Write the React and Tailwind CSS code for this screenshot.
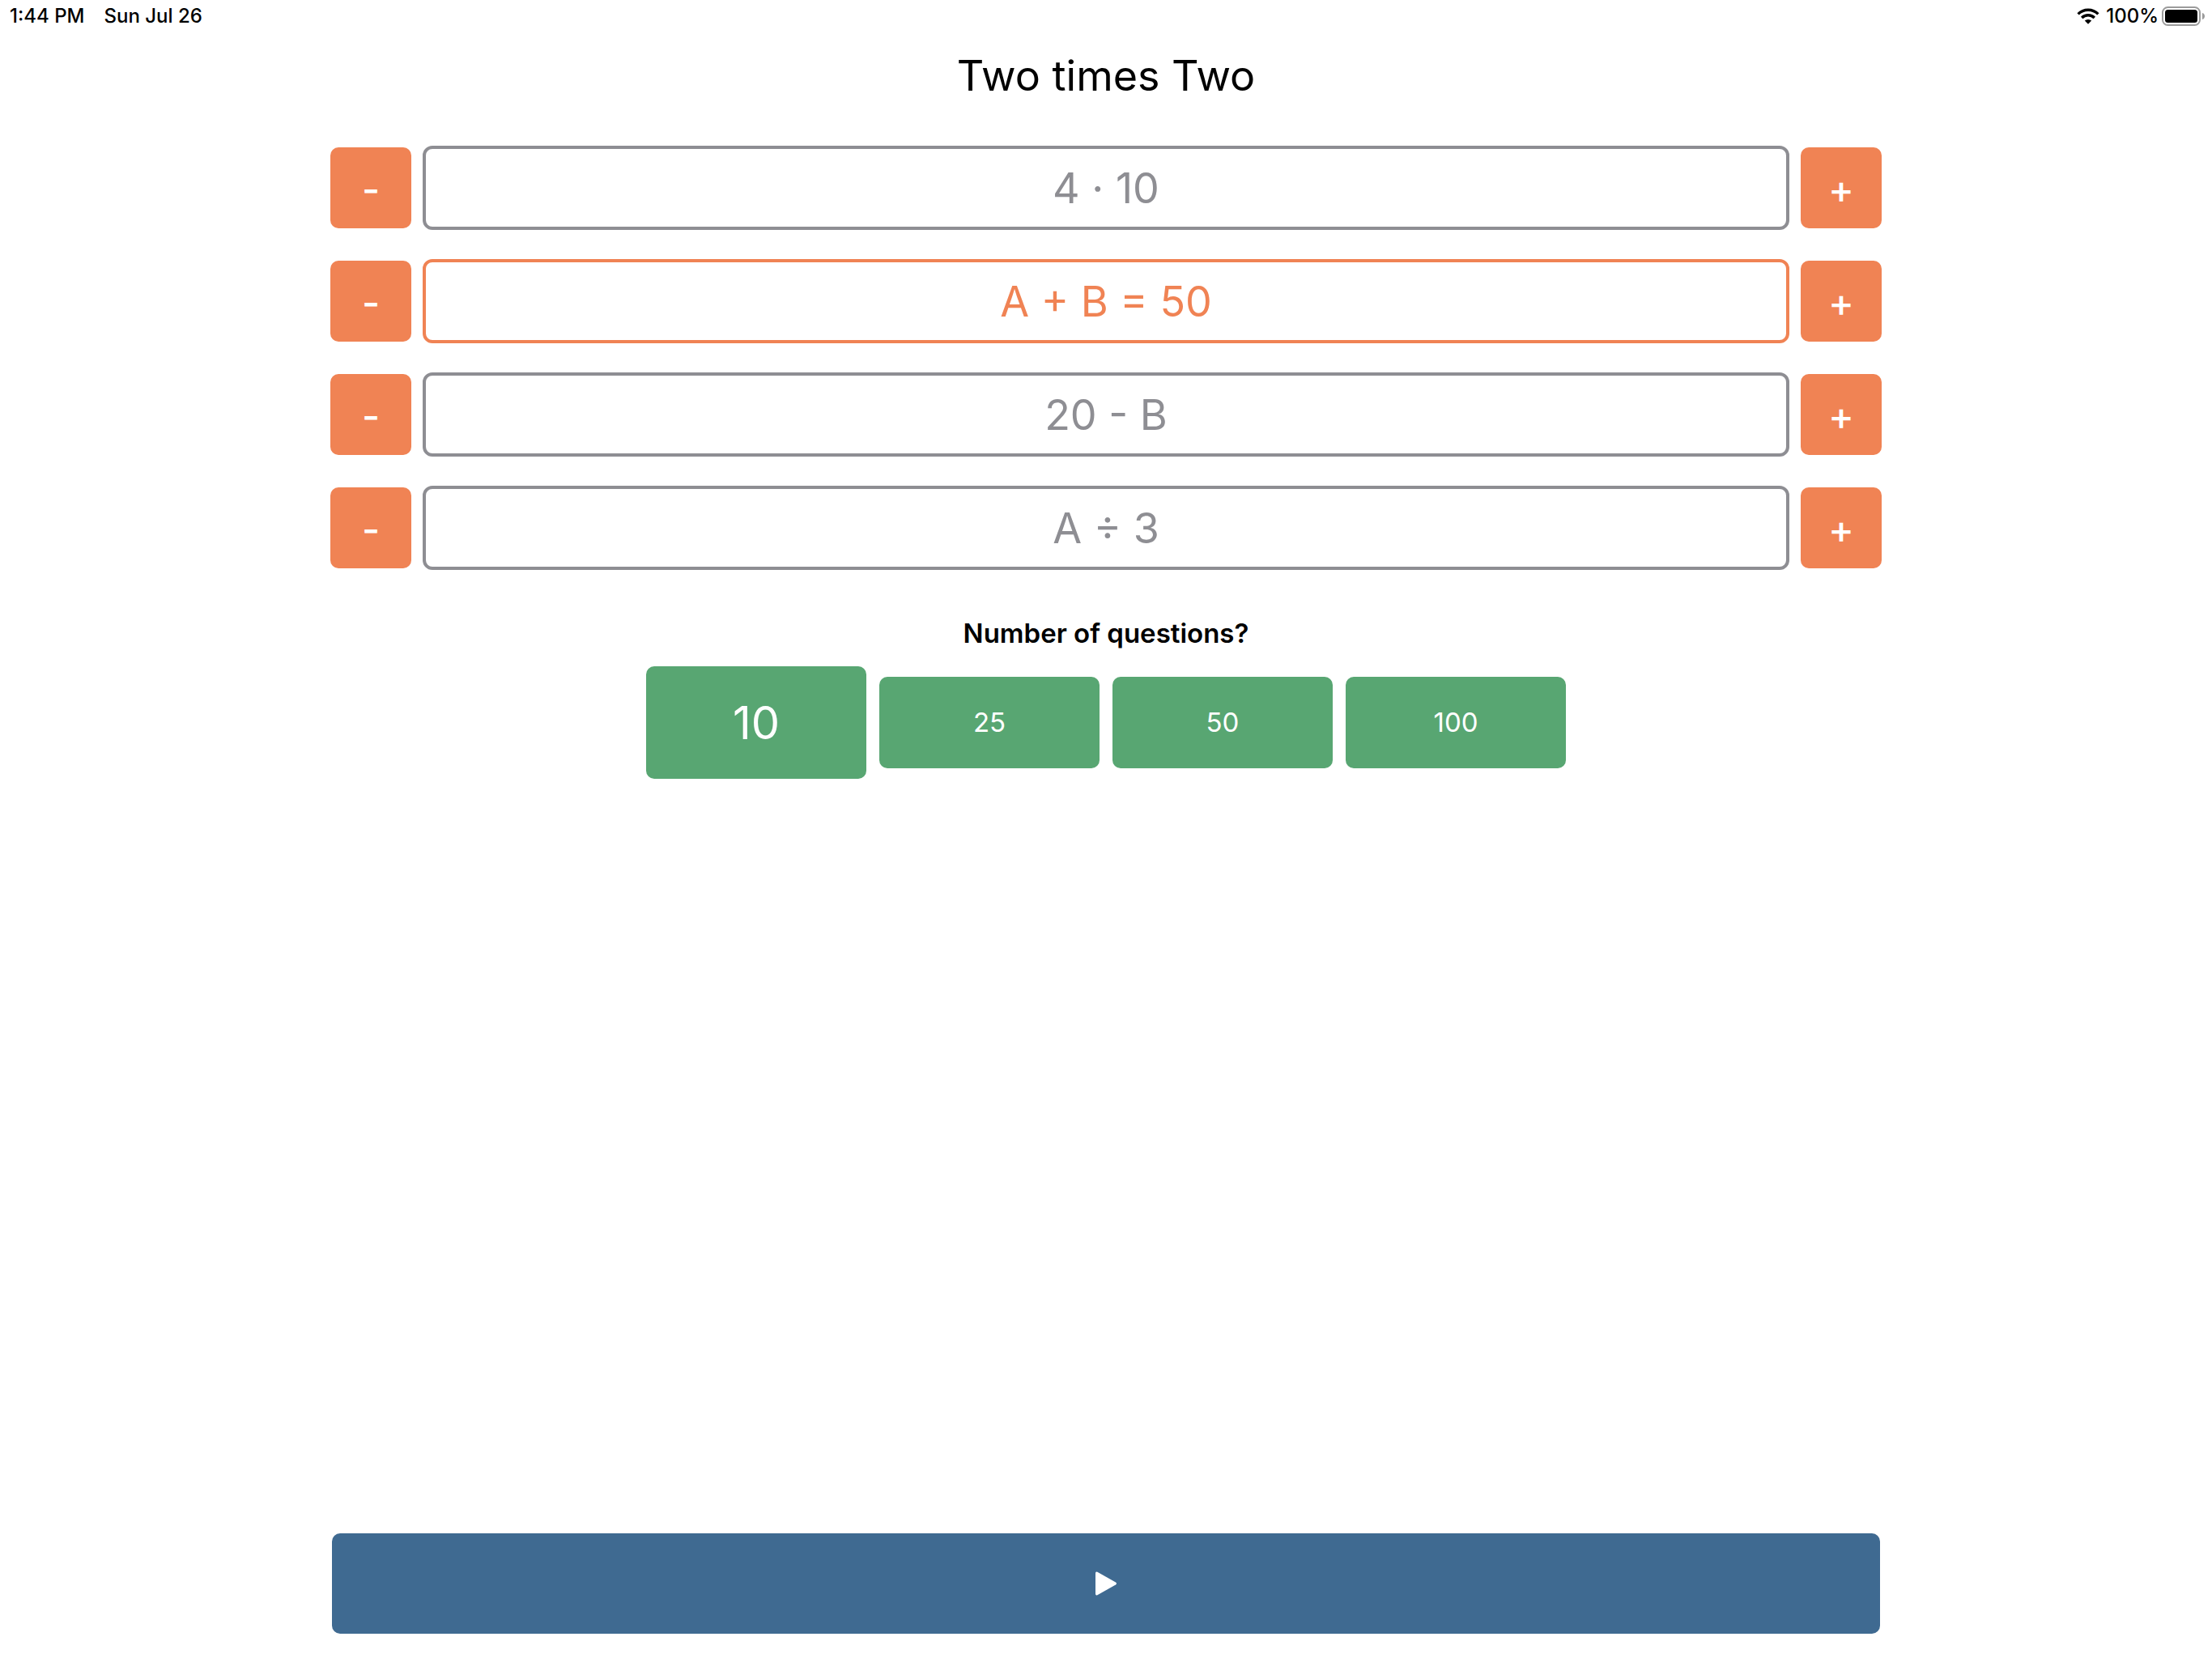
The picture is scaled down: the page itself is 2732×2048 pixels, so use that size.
import { useState } from "react";

const ROWS = [
  { label: "4 · 10", active: false },
  { label: "A + B = 50", active: true },
  { label: "20 - B", active: false },
  { label: "A ÷ 3", active: false },
];

const COUNTS = [10, 25, 50, 100];

function WifiIcon() {
  return (
    <svg width="28" height="20" viewBox="0 0 28 20" fill="none" stroke="#000" strokeWidth="3.4" aria-hidden="true">
      <path d="M1.6 7.4a17.6 17.6 0 0 1 24.8 0" />
      <path d="M6.2 12a11 11 0 0 1 15.6 0" />
      <path d="M14 19.8l-4.2-4.2a6 6 0 0 1 8.4 0z" fill="#000" stroke="none" />
    </svg>
  );
}

function BatteryIcon() {
  return (
    <svg width="54" height="24" viewBox="0 0 54 24" aria-hidden="true">
      <rect x="1" y="1" width="46" height="22" rx="6.5" fill="none" stroke="#9b9b9b" strokeWidth="2" />
      <rect x="4" y="4" width="40" height="16" rx="3.5" fill="#000" />
      <path d="M50 8c2 .6 3 2.100 3 4s-1 3.400-3 4z" fill="#9b9b9b" />
    </svg>
  );
}

function StatusBar() {
  return (
    <header className="flex h-10 items-center justify-between pl-3 pr-2 text-[24px] font-medium leading-10">
      <div className="flex gap-6">
        <span>1:44 PM</span>
        <span>Sun Jul 26</span>
      </div>
      <div className="flex items-center">
        <WifiIcon />
        <span className="ml-2 mr-1">100%</span>
        <BatteryIcon />
      </div>
    </header>
  );
}

function StepButton({ sign, name }) {
  return (
    <button
      type="button"
      aria-label={name}
      className="flex size-[100px] shrink-0 items-center justify-center rounded-[10px] bg-[#f08354] pt-1 text-[48px] font-medium leading-none text-white"
    >
      {sign}
    </button>
  );
}

function OperationRow({ label, active, onToggle }) {
  return (
    <div className="flex items-center gap-3.5">
      <StepButton sign="-" name={`Decrease ${label}`} />
      <button
        type="button"
        aria-pressed={active}
        onClick={onToggle}
        className={
          "h-[104px] flex-1 rounded-xl border-4 pt-0.5 text-center text-[52px] leading-none " +
          (active ? "border-[#f08354] text-[#f08354]" : "border-[#8e8e93] text-[#8e8e93]")
        }
      >
        {label}
      </button>
      <StepButton sign="+" name={`Increase ${label}`} />
    </div>
  );
}

export default function App() {
  const [rows, setRows] = useState(ROWS);
  const [count, setCount] = useState(10);

  const toggle = (index) =>
    setRows(rows.map((row, i) => (i === index ? { ...row, active: !row.active } : row)));

  return (
    <div className="flex min-h-screen flex-col bg-white font-['Inter',sans-serif] text-black">
      <StatusBar />
      <main className="flex flex-1 flex-col items-center pb-[30px]">
        <h1 className="mt-5 text-[52px] leading-[68px]">Two times Two</h1>

        <section className="mt-[52px] flex w-full max-w-[1916px] flex-col gap-9">
          {rows.map((row, i) => (
            <OperationRow key={row.label} {...row} onToggle={() => toggle(i)} />
          ))}
        </section>

        <h2 className="mt-[58px] text-[33px] font-semibold leading-10">Number of questions?</h2>
        <div className="mt-[21px] flex items-center gap-4">
          {COUNTS.map((n) => (
            <button
              key={n}
              type="button"
              aria-pressed={n === count}
              onClick={() => setCount(n)}
              className={
                "w-[272px] rounded-[10px] bg-[#58a672] text-white " +
                (n === count ? "h-[139px] text-[56px]" : "h-[113px] text-[33px]")
              }
            >
              {n}
            </button>
          ))}
        </div>

        <button
          type="button"
          aria-label="Start"
          className="mt-auto flex h-[124px] w-[70%] items-center justify-center rounded-[10px] bg-[#3f6a91]"
        >
          <svg width="28" height="30" viewBox="0 0 28 30" fill="#fff" aria-hidden="true">
            <path d="M1 2.200Q1 -.2 3.400 .8L26 13.600Q28 15 26 16.400L3.400 29.200Q1 30.200 1 27.800Z" />
          </svg>
        </button>
      </main>
    </div>
  );
}
